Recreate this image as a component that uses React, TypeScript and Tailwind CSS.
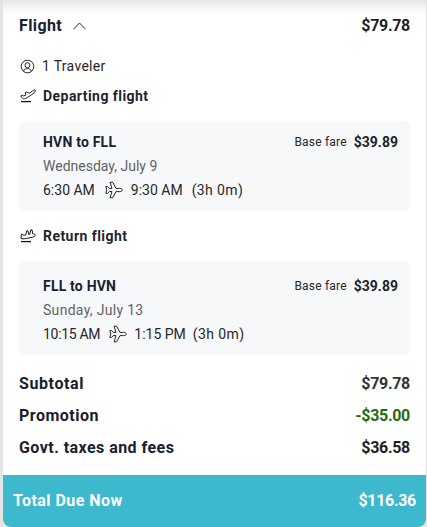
const font = "font-['Roboto',sans-serif]";

function PlaneIcon() {
  return (
    <svg width="18" height="18" viewBox="0 0 18 18" fill="none" stroke="#27272a" strokeWidth="1" strokeLinejoin="round" className="shrink-0">
      <path d="M0.8 5.6 L2.6 5.6 L4.2 7.4 L7 7.4 L5 1.2 L7.6 1.2 L11 7.4 L14.6 7.4 C16.2 7.4 17.4 8.2 17.4 9 C17.4 9.8 16.2 10.6 14.6 10.6 L11 10.6 L7.6 16.8 L5 16.8 L7 10.6 L4.2 10.6 L2.6 12.4 L0.8 12.4 L1.8 9 Z" />
    </svg>
  );
}

function TakeoffIcon() {
  return (
    <svg width="16" height="14" viewBox="0 0 16 14" fill="none" stroke="#18181b" strokeWidth="1" strokeLinejoin="round" className="shrink-0">
      <path d="M0.8 7 L2.2 6.2 L3.8 7 L6 5.8 L5.2 3.6 L6.8 3 L9.4 4.4 L12.4 2 C13.8 1 15.4 0.8 15.4 1.8 C15.4 3 13.4 4.6 11.4 5.8 C8.6 7.6 6.2 9.4 4.4 9.8 C3.4 10 2.6 9.6 2 8.8 Z" />
      <path d="M1 12.6 H11" strokeWidth="1.3" />
    </svg>
  );
}

function LandingIcon() {
  return (
    <svg width="16" height="14" viewBox="0 0 16 14" fill="none" stroke="#18181b" strokeWidth="1" strokeLinejoin="round" className="shrink-0">
      <path d="M1 9.4 C2 10 3.6 10 5.6 9.6 L12.6 8.2 C14.6 7.8 15.6 6.8 15.2 5.8 C14.8 4.8 13.6 4.6 12.6 4.8 L12.2 1 L10.8 0.8 L9.8 5.2 L8.6 5.4 L8 1.8 L6.6 1.8 L5.8 6 L3.4 6.4 L2.4 5 L1.4 5.2 Z" />
      <path d="M1 12.6 H11" strokeWidth="1.3" />
    </svg>
  );
}

function UserIcon() {
  return (
    <svg width="15" height="15" viewBox="0 0 15 15" fill="none" stroke="#27272a" strokeWidth="1" className="shrink-0">
      <circle cx="7.5" cy="7.5" r="6.3" />
      <circle cx="7.5" cy="6.2" r="2.5" />
      <path d="M3.4 12 C4.4 10.3 5.8 9.6 7.5 9.6 C9.2 9.6 10.6 10.3 11.6 12" />
    </svg>
  );
}

interface LegCardProps {
  route: string;
  date: string;
  times: [string, string, string];
  topClass: string;
  dateClass?: string;
  departClass?: string;
  planeClass: string;
  durationClass: string;
}

function LegCard({ route, date, times, topClass, dateClass = "", departClass = "", planeClass, durationClass }: LegCardProps) {
  return (
    <div className={`bg-[#f7f8fa] rounded-md pb-[11px] pl-6 pr-3 ${topClass}`}>
      <div className="flex justify-between items-center h-[20px]">
        <span className="text-[14px] font-bold tracking-[0.2px] text-[#1a2030]">{route}</span>
        <span className="flex items-center gap-[7px]">
          <span className="text-[12px] tracking-[0.2px] text-[#27272a]">Base fare</span>
          <span className="text-[14px] font-bold text-[#1f1f1f]">$39.89</span>
        </span>
      </div>
      <div className={`mt-[4px] h-[20px] text-[14px] leading-[20px] text-[#5f6368] ${dateClass}`}>{date}</div>
      <div className="mt-[4px] h-[20px] flex items-center text-[14px] text-[#27272a]">
        <span className={departClass}>{times[0]}</span>
        <span className={planeClass}><PlaneIcon /></span>
        <span>{times[1]}</span>
        <span className={`tracking-[0.4px] ${durationClass}`}>{times[2]}</span>
      </div>
    </div>
  );
}

function SummaryRow({ label, value, labelClass, valueClass }: { label: string; value: string; labelClass: string; valueClass: string }) {
  return (
    <div className="flex justify-between items-center h-[32px] px-4">
      <span className={`text-[16px] font-bold text-[#1a2030] ${labelClass}`}>{label}</span>
      <span className={`text-[16px] font-bold tracking-[-0.3px] ${valueClass}`}>{value}</span>
    </div>
  );
}

export default function App() {
  return (
    <div className={`${font} w-[427px] h-[527px] bg-[#e4e4e4] pl-[3px] pr-[1px] overflow-hidden`}>
      <div className="h-full bg-white rounded-b-lg overflow-hidden flex flex-col">
        {/* top shadow */}
        <div className="h-[14px] bg-gradient-to-b from-[#e8e8e8] to-white" />

        <div className="flex justify-between items-center h-[24px] px-4">
          <div className="flex items-center gap-[11px]">
            <span className="text-[16px] font-bold tracking-[0.4px] text-[#1a2030]">Flight</span>
            <svg width="13" height="8" viewBox="0 0 13 8" fill="none" stroke="#27272a" strokeWidth="1" className="shrink-0">
              <path d="M0.5 7.2 L6.5 1 L12.5 7.2" />
            </svg>
          </div>
          <span className="text-[16px] font-bold tracking-[-0.3px] text-[#1f1f1f]">$79.78</span>
        </div>

        <div className="flex items-center gap-[7px] pl-4 h-[20px] mt-[18px] ml-[1px]">
          <UserIcon />
          <span className="text-[14px] tracking-[0.3px] text-[#27272a]">1 Traveler</span>
        </div>

        <div className="flex items-center gap-[7px] pl-4 h-[20px] mt-[10px] ml-[1px]">
          <TakeoffIcon />
          <span className="text-[14px] font-bold tracking-[0.45px] text-[#1f2430]">Departing flight</span>
        </div>

        <div className="px-4 mt-[15px]">
          <LegCard
            route="HVN to FLL"
            date="Wednesday, July 9"
            times={["6:30 AM", "9:30 AM", "(3h 0m)"]}
            topClass="pt-[11px]"
            planeClass="ml-[10px] mr-[8px]"
            durationClass="ml-[9px]"
          />
        </div>

        <div className="flex items-center gap-[7px] pl-4 h-[20px] mt-[15px] ml-[1px]">
          <LandingIcon />
          <span className="text-[14px] font-bold tracking-[0.45px] text-[#1f2430]">Return flight</span>
        </div>

        <div className="px-4 mt-[15px]">
          <LegCard
            route="FLL to HVN"
            date="Sunday, July 13"
            times={["10:15 AM", "1:15 PM", "(3h 0m)"]}
            topClass="pt-[15px]"
            dateClass="tracking-[0.3px]"
            departClass="tracking-[-0.3px]"
            planeClass="ml-[9px] mr-[7px]"
            durationClass="ml-[7px]"
          />
        </div>

        <div className="mt-[13px]">
          <SummaryRow label="Subtotal" value="$79.78" labelClass="tracking-[0.6px]" valueClass="text-[#333333]" />
          <SummaryRow label="Promotion" value="-$35.00" labelClass="tracking-[0.5px]" valueClass="text-[#1f6b0e]" />
          <SummaryRow label="Govt. taxes and fees" value="$36.58" labelClass="tracking-[0.45px]" valueClass="text-[#1f1f1f]" />
        </div>

        <div className="mt-auto h-[52px] bg-[#3db8cc] flex justify-between items-center pl-[10px] pr-[10px] text-white text-[16px] font-bold">
          <span className="tracking-[0.45px]">Total Due Now</span>
          <span className="tracking-[-0.3px]">$116.36</span>
        </div>
      </div>
    </div>
  );
}
